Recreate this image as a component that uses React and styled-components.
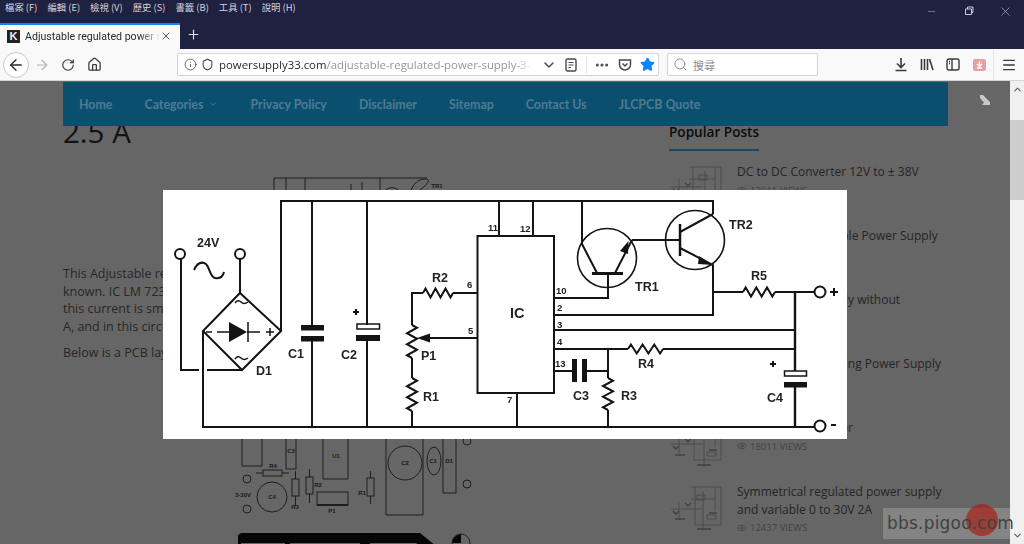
import styled, { createGlobalStyle } from "styled-components";
import {
  ArrowLeft,
  ArrowRight,
  RotateCw,
  Home,
  Info,
  Shield,
  ChevronDown,
  ChevronUp,
  Ellipsis,
  Star,
  Search,
  Menu,
  X,
  Plus,
  Minus,
  Eye,
} from "lucide-react";

const GlobalStyle = createGlobalStyle`
  html, body {
    margin: 0;
    padding: 0;
    height: 100%;
    overflow: hidden;
    background: #fff;
  }
`;

const Browser = styled.div`
  position: relative;
  width: 1024px;
  height: 544px;
  display: flex;
  flex-direction: column;
  overflow: hidden;
  font-family: "Open Sans", "Noto Sans CJK TC", sans-serif;
`;

const TitleBar = styled.div`
  height: 23px;
  flex: none;
  display: flex;
  align-items: flex-start;
  justify-content: space-between;
  background: #1f2140;
`;

const MenuList = styled.div`
  display: flex;
  gap: 10px;
  padding: 0 0 0 5px;
  color: #d4d5de;
  font: 9.4px/14px "Noto Sans CJK TC", sans-serif;
`;

const WindowControls = styled.div`
  display: flex;
  color: #c9cad4;
`;

const WindowButton = styled.div`
  width: 37px;
  height: 22px;
  display: flex;
  align-items: center;
  justify-content: center;
`;

const TabStrip = styled.div`
  height: 26px;
  flex: none;
  display: flex;
  background: #1f2140;
`;

const Tab = styled.div`
  width: 180px;
  box-sizing: border-box;
  display: flex;
  align-items: center;
  padding: 0 8px 2px 7px;
  background: #f9f9fa;
  border-top: 2px solid #0a84ff;
  color: #2a2a2e;
  font: 10.6px "Roboto", sans-serif;
`;

const Favicon = styled.span`
  width: 13px;
  height: 13px;
  flex: none;
  margin-right: 5px;
  background: #222;
  color: #eee;
  font: bold 11px/13px "Liberation Sans", sans-serif;
  text-align: center;
`;

const TabTitle = styled.span`
  flex: 1;
  white-space: nowrap;
  overflow: hidden;
  -webkit-mask-image: linear-gradient(to right, #000 85%, transparent);
  mask-image: linear-gradient(to right, #000 85%, transparent);
`;

const NewTab = styled.div`
  width: 26px;
  padding-bottom: 3px;
  display: flex;
  align-items: center;
  justify-content: center;
  color: #e4e4ea;
`;

const Toolbar = styled.div`
  height: 32px;
  flex: none;
  box-sizing: border-box;
  display: flex;
  align-items: center;
  padding: 0 2px 0 3px;
  background: #f9f9fa;
  border-bottom: 1px solid #cfd6d8;
`;

const BackButton = styled.div`
  width: 26px;
  height: 26px;
  box-sizing: border-box;
  display: flex;
  align-items: center;
  justify-content: center;
  border: 1px solid #c8c8cc;
  border-radius: 50%;
  background: #fff;
  color: #2a2a2e;
`;

const ToolIcon = styled.div`
  width: 26px;
  height: 26px;
  flex: none;
  display: flex;
  align-items: center;
  justify-content: center;
  color: ${(p) => (p.$dim ? "#b1b1b3" : "#3a3a3d")};
`;

const UrlBar = styled.div`
  width: 482px;
  height: 23px;
  flex: none;
  box-sizing: border-box;
  margin-left: 70px;
  display: flex;
  align-items: center;
  padding-left: 3px;
  background: #fff;
  border: 1px solid #d4d4d6;
  border-radius: 2px;
  color: #4a4a4f;
`;

const UrlIcon = styled.div`
  width: ${(p) => p.$w || 18}px;
  flex: none;
  display: flex;
  align-items: center;
  justify-content: center;
`;

const UrlText = styled.div`
  flex: 1;
  min-width: 0;
  margin: 0 5px 0 4px;
  white-space: nowrap;
  overflow: hidden;
  font: 11.4px "Open Sans", sans-serif;
  color: #2a2a2e;
  -webkit-mask-image: linear-gradient(to right, #000 94%, transparent);
  mask-image: linear-gradient(to right, #000 94%, transparent);
`;

const UrlPath = styled.span`
  color: #96969b;
`;

const UrlDivider = styled.div`
  width: 1px;
  height: 17px;
  flex: none;
  margin: 0 4px;
  background: #e4e4e6;
`;

const SearchBox = styled.div`
  width: 151px;
  height: 23px;
  flex: none;
  box-sizing: border-box;
  margin-left: 8px;
  display: flex;
  align-items: center;
  gap: 5px;
  padding-left: 5px;
  background: #fff;
  border: 1px solid #d4d4d6;
  border-radius: 2px;
  color: #8b8b8f;
  font: 11px "Noto Sans CJK TC", sans-serif;
`;

const ToolGroup = styled.div`
  margin-left: auto;
  display: flex;
  align-items: center;
`;

const ToolDivider = styled.div`
  width: 1px;
  height: 30px;
  margin: 0 2px 0 1px;
  background: #e6e6e8;
`;

const Viewport = styled.div`
  flex: 1;
  min-height: 0;
  display: flex;
`;

const Page = styled.div`
  position: relative;
  flex: 1;
  min-width: 0;
  overflow: hidden;
  display: flex;
  gap: 31px;
  padding: 31px 0 0 63px;
  background: #fff;
`;

const Article = styled.div`
  width: 575px;
  flex: none;
`;

const Heading = styled.h1`
  margin: 0;
  font: 500 29.5px/40px "Open Sans", sans-serif;
  color: #303030;
`;

const Paragraph = styled.p`
  margin: 0 0 9px;
  font: 400 12.5px/17.5px "Open Sans", sans-serif;
  color: #646464;
`;

const Figure = styled.svg`
  display: block;
  margin-left: ${(p) => p.$left}px;
  margin-top: ${(p) => p.$top}px;
  fill: none;
  stroke: #4c4c4c;
  stroke-width: 1;
`;

const FigureText = styled.text`
  font: 700 6px "Liberation Sans", sans-serif;
  fill: #444;
  stroke: none;
  text-anchor: middle;
`;

const Sidebar = styled.aside`
  width: 280px;
  flex: none;
`;

const SidebarTitle = styled.h2`
  display: inline-block;
  margin: 10px 0 12px;
  padding-bottom: 8px;
  border-bottom: 2px solid #4bb0f0;
  font: 600 13.6px/19px "Open Sans", sans-serif;
  color: #1c1c1c;
`;

const PostRow = styled.div`
  display: flex;
  gap: 12px;
  height: 64px;
`;

const PostThumb = styled.svg`
  width: 56px;
  height: 54px;
  flex: none;
  fill: none;
  stroke: #5a5a5a;
  stroke-width: 0.7;
  opacity: 0.55;
`;

const PostBody = styled.div`
  flex: 1;
  min-width: 0;
`;

const PostTitle = styled.div`
  width: 215px;
  font: 400 12px/17.5px "Open Sans", sans-serif;
  color: #5c5c5c;
`;

const PostViews = styled.div`
  display: flex;
  align-items: center;
  gap: 3px;
  margin-top: 1px;
  font: 400 9.5px/17px "Open Sans", sans-serif;
  color: #a8a8a8;
`;

const Overlay = styled.div`
  position: absolute;
  inset: 0;
  z-index: 1;
  display: flex;
  align-items: center;
  justify-content: center;
  padding-top: 4px;
  box-sizing: border-box;
  background: rgba(0, 0, 0, 0.6);
`;

const Schematic = styled.svg`
  width: 684px;
  height: 249px;
  display: block;
  background: #fff;
  fill: none;
  stroke: #141414;
  stroke-width: 2;
  filter: blur(0.35px);
`;

const SchLabel = styled.text`
  font: 700 ${(p) => p.$size || 12.5}px "Liberation Sans", sans-serif;
  fill: #222;
  stroke: none;
`;

const Solid = styled.g`
  fill: #141414;
  stroke: none;
`;

const NavBar = styled.nav`
  position: absolute;
  top: 1px;
  left: 63px;
  width: 885px;
  height: 44px;
  z-index: 2;
  box-sizing: border-box;
  display: flex;
  align-items: center;
  gap: 32px;
  padding-left: 16px;
  background: #0b4f6f;
  color: #4d7b91;
  font: 700 12.4px "Lato", sans-serif;
`;

const NavItem = styled.div`
  display: flex;
  align-items: center;
  gap: 5px;
`;

const ExpandIcon = styled.svg`
  position: absolute;
  top: 13px;
  right: 19px;
  z-index: 2;
`;

const Scrollbar = styled.div`
  width: 14px;
  flex: none;
  display: flex;
  flex-direction: column;
  align-items: center;
  background: #f0f0f0;
  color: #555;
`;

const ScrollArrow = styled.div`
  height: 17px;
  display: flex;
  align-items: center;
  justify-content: center;
`;

const ScrollTrack = styled.div`
  flex: 1;
  width: 100%;
  padding-top: 22px;
  box-sizing: border-box;
`;

const ScrollThumb = styled.div`
  height: 80px;
  background: #cdcdcd;
`;

const Watermark = styled.div`
  position: absolute;
  left: 883px;
  top: 508px;
  width: 127px;
  height: 31px;
  z-index: 3;
  box-sizing: border-box;
  padding-left: 4px;
  background: rgba(255, 255, 255, 0.2);
  color: #414141;
  font: 17px/31px "DejaVu Sans", sans-serif;
  letter-spacing: 0.2px;
  white-space: nowrap;
`;

const WatermarkDot = styled.div`
  position: absolute;
  left: 83px;
  top: -4px;
  width: 32px;
  height: 32px;
  border-radius: 50%;
  background: rgba(165, 35, 25, 0.72);
`;

const WatermarkText = styled.span`
  position: relative;
`;

const menus = ["檔案 (F)", "編輯 (E)", "檢視 (V)", "歷史 (S)", "書籤 (B)", "工具 (T)", "說明 (H)"];

const navItems = ["Home", "Categories", "Privacy Policy", "Disclaimer", "Sitemap", "Contact Us", "JLCPCB Quote"];

const posts = [
  { title: "DC to DC Converter 12V to ± 38V", views: "13011 VIEWS" },
  { title: "Regulated, Adjustable Power Supply", views: "16230 VIEWS" },
  { title: "Simple Power Supply without transformer", views: "14872 VIEWS" },
  { title: "Controllable Switching Power Supply", views: "15120 VIEWS" },
  { title: "5V Voltage Regulator", views: "18011 VIEWS" },
  { title: "Symmetrical regulated power supply and variable 0 to 30V 2A", views: "12437 VIEWS" },
];

// zigzag resistors, 3 teeth up and down
const zigH = (x1, x2, y, h = 5) => {
  const s = (x2 - x1) / 6;
  let d = `M${x1} ${y}`;
  for (let i = 0; i < 6; i++) d += ` L${x1 + s * (i + 0.5)} ${y + (i % 2 ? h : -h)}`;
  return `${d} L${x2} ${y}`;
};

const zigV = (x, y1, y2, w = 5) => {
  const s = (y2 - y1) / 6;
  let d = `M${x} ${y1}`;
  for (let i = 0; i < 6; i++) d += ` L${x + (i % 2 ? -w : w)} ${y1 + s * (i + 0.5)}`;
  return `${d} L${x} ${y2}`;
};

const CircuitDiagram = () => (
  <Schematic viewBox="163 190 684 249">
    {/* rails */}
    <path d="M281 331 V201 H713 V214" />
    <path d="M203 331 V427 H815" />
    <path d="M312 201 V326 M312 340 V427" />
    <path d="M367 201 V325 M367 340 V427" />
    <path d="M499 201 V236 M533 201 V236 M517 393 V427" />

    {/* mains input and bridge */}
    <circle cx="180" cy="254" r="5" />
    <circle cx="240" cy="254" r="5" />
    <path d="M240 259 V293 M181 259 V370 H199 M207 370 H242" />
    <path d="M240 293 L281 331 L242 370 L203 331 Z" />
    <path d="M194 270 C197 263 202 261 206 264 C210 268 210 277 215 278 C220 279 223 276 224 272" />
    <path d="M235 303 Q238 299 241 302 T248 302 M235 359 Q238 355 241 358 T248 358" strokeWidth="1.5" />
    <path d="M206 332 H212 M217 332 H229 M247 332 H260 M248 322 V342 M266 332 H274 M270 328 V336" strokeWidth="1.5" />
    <Solid>
      <polygon points="229,322 229,342 247,332" />
      <rect x="301" y="325" width="23" height="5.5" />
      <rect x="301" y="336" width="23" height="5.5" />
      <rect x="356" y="335" width="24" height="6" />
      <rect x="784" y="382" width="23" height="5.5" />
      <rect x="572" y="359" width="5" height="23" />
      <rect x="582" y="359" width="5" height="23" />
      <polygon points="417,338 430,333.5 430,342.5" />
      <polygon points="628.5,241 620,251 628,254" />
      <polygon points="713,265 699,256 698,264" />
    </Solid>
    <rect x="357" y="324" width="22.5" height="5" strokeWidth="1.5" />
    <rect x="784.5" y="371" width="22" height="5" strokeWidth="1.5" />

    {/* IC and feedback */}
    <rect x="477.5" y="236" width="76.5" height="157" />
    <path d="M478 293 H453" />
    <path d={zigH(423, 453, 293, 4.5)} />
    <path d="M423 293 H412 V325" />
    <path d={zigV(412, 325, 358)} />
    <path d="M412 358 V378" />
    <path d={zigV(412, 378, 411)} />
    <path d="M412 411 V427 M478 338 H425" />

    {/* TR1 */}
    <circle cx="607" cy="258" r="29.5" strokeWidth="1.6" />
    <path d="M582 201 V244 L597 273 M615 273 L632 240" />
    <path d="M592 273.5 H623" strokeWidth="3" />
    <path d="M608 274 V298 H554" />

    {/* TR2 */}
    <circle cx="695" cy="240" r="29.5" strokeWidth="1.6" />
    <path d="M632 240 H680 M680 232 L713 214 M680 248 L713 265 V315 H554" />
    <path d="M680 224 V256" strokeWidth="2.5" />

    {/* output side */}
    <path d="M714 292 H743 M775 292 H815" />
    <path d={zigH(743, 775, 292, 4.5)} />
    <path d="M795 292 V371 M795 387 V427" strokeWidth="2.4" />
    <circle cx="820" cy="292" r="5.5" />
    <circle cx="820" cy="426" r="5.5" />
    <path d="M830 292 H838 M834 288 V296 M831 425 H836" />
    <path d="M554 330 H795 M554 349 H628 M663 349 H795" />
    <path d={zigH(628, 663, 349, 4.5)} />
    <path d="M608 349 V378" />
    <path d={zigV(608, 378, 410)} />
    <path d="M608 410 V427" />
    <path d="M554 371 H572 M587 371 H608" />
    <path d="M353 312 H359 M356 309 V315 M770 364 H776 M773 361 V367" />

    <SchLabel x="197" y="247">24V</SchLabel>
    <SchLabel x="256" y="375">D1</SchLabel>
    <SchLabel x="288" y="358">C1</SchLabel>
    <SchLabel x="341" y="359">C2</SchLabel>
    <SchLabel x="432" y="282">R2</SchLabel>
    <SchLabel x="421" y="360">P1</SchLabel>
    <SchLabel x="423" y="401">R1</SchLabel>
    <SchLabel x="510" y="318" $size={14.5}>IC</SchLabel>
    <SchLabel x="635" y="291">TR1</SchLabel>
    <SchLabel x="729" y="229">TR2</SchLabel>
    <SchLabel x="751" y="280">R5</SchLabel>
    <SchLabel x="638" y="368">R4</SchLabel>
    <SchLabel x="573" y="400">C3</SchLabel>
    <SchLabel x="621" y="400">R3</SchLabel>
    <SchLabel x="767" y="402">C4</SchLabel>
    <SchLabel x="488" y="231" $size={9.5}>11</SchLabel>
    <SchLabel x="520" y="232" $size={9.5}>12</SchLabel>
    <SchLabel x="467" y="288" $size={9.5}>6</SchLabel>
    <SchLabel x="468" y="334" $size={9.5}>5</SchLabel>
    <SchLabel x="507" y="403" $size={9.5}>7</SchLabel>
    <SchLabel x="556" y="294" $size={9.5}>10</SchLabel>
    <SchLabel x="557" y="311" $size={9.5}>2</SchLabel>
    <SchLabel x="557" y="328" $size={9.5}>3</SchLabel>
    <SchLabel x="557" y="345" $size={9.5}>4</SchLabel>
    <SchLabel x="555" y="367" $size={9.5}>13</SchLabel>
  </Schematic>
);

const SmallSchematic = () => (
  <Figure $left={177} $top={24} width="240" height="89" viewBox="240 176 240 89">
    <path d="M274 190 V178 H427 M286 178 V190 M305 178 V190 M351 184 V190 M362 182 V190 M380 178 V190" />
    <path d="M386 190 Q392 185 398 190 M411 190 Q416 178 427 179 Q432 181 420 190" />
    <FigureText x="437" y="188">TR1</FigureText>
  </Figure>
);

const PcbLayout = () => (
  <Figure $left={172} $top={0} width="240" height="175" viewBox="235 370 240 175">
    <path d="M242 370 V465 H262 V370 M286 370 V468 H296 V370 M323 370 V478 H348 V370 M386 370 V514 H423 V370 M443 370 V492 H456 V370" />
    <ellipse cx="434" cy="460" rx="7" ry="14" />
    <circle cx="405" cy="462" r="17" />
    <circle cx="467" cy="440" r="4" />
    <circle cx="467" cy="483" r="4" />
    <circle cx="247" cy="478" r="4" />
    <circle cx="247" cy="508" r="4" />
    <circle cx="272" cy="496" r="15" />
    <path d="M256 472 H263 M282 472 H289 M295.5 470 V478 M295.5 495 V505 M309.5 468 V476 M309.5 493 V502 M370.5 470 V477 M370.5 495 V503" />
    <rect x="263" y="469" width="19" height="6" />
    <rect x="292" y="478" width="7" height="17" />
    <rect x="306" y="476" width="7" height="17" />
    <rect x="367" y="477" width="7" height="18" />
    <rect x="317" y="491" width="31" height="13" />
    <path d="M317 504 H348" strokeWidth="2" />
    <path d="M238 545 V534 L241 532 H420 L436 545 Z M461 533 A9 9 0 0 0 452 542 H461 Z" fill="#111" stroke="none" />
    <circle cx="461" cy="542" r="9" />
    <path d="M241 545 V542 H285 V545 M290 545 V542 H360 V545 M370 545 V542 H416 L420 545" fill="#fff" stroke="none" />
    <FigureText x="273" y="467">R4</FigureText>
    <FigureText x="336" y="457">U1</FigureText>
    <FigureText x="291" y="452">C3</FigureText>
    <FigureText x="405" y="464">C2</FigureText>
    <FigureText x="433" y="462">C1</FigureText>
    <FigureText x="449" y="462">D1</FigureText>
    <FigureText x="243" y="496">3-30V</FigureText>
    <FigureText x="272" y="498">C4</FigureText>
    <FigureText x="295" y="508">R3</FigureText>
    <FigureText x="318" y="486">R2</FigureText>
    <FigureText x="332" y="512">P1</FigureText>
    <FigureText x="362" y="494">R1</FigureText>
  </Figure>
);

const Thumb = ({ seed }) => (
  <PostThumb viewBox="0 0 56 54">
    <path d={`M${20 + seed} 4 H52 V${40 + seed} H${24 + seed} V4 M${20 + seed} 16 H46 M2 ${24 + seed} H34 M10 ${16 + seed} V36 M${36 - seed} 8 V48 M46 4 V28`} />
    <path d={`M4 ${26 + seed} l3 3 l3 -3 M16 20 l3 3 l3 -3 M40 ${32 - seed} h8 M28 46 h14 M6 36 h10`} strokeWidth="1.4" />
    <rect x={30 - seed} y="12" width="8" height="5" />
    <rect x="38" y={34 - seed} width="9" height="4" />
  </PostThumb>
);

const App = () => {
  return (
    <Browser>
      <GlobalStyle />
      <TitleBar>
        <MenuList>
          {menus.map((m) => (
            <span key={m}>{m}</span>
          ))}
        </MenuList>
        <WindowControls>
          <WindowButton><Minus size={11} strokeWidth={1} /></WindowButton>
          <WindowButton>
            <svg width="10" height="10" viewBox="0 0 10 10" fill="none" stroke="currentColor">
              <path d="M1.5 3 H7.5 V8.5 H1.5 Z M3.5 3 V1 H9 V6.5 H7.5" />
            </svg>
          </WindowButton>
          <WindowButton><X size={15} strokeWidth={1} /></WindowButton>
        </WindowControls>
      </TitleBar>

      <TabStrip>
        <Tab>
          <Favicon>K</Favicon>
          <TabTitle>Adjustable regulated power supply 3-30V</TabTitle>
          <X size={12} strokeWidth={1.6} />
        </Tab>
        <NewTab><Plus size={15} strokeWidth={1.8} /></NewTab>
      </TabStrip>

      <Toolbar>
        <BackButton><ArrowLeft size={18} strokeWidth={1.8} /></BackButton>
        <ToolIcon $dim><ArrowRight size={16} strokeWidth={1.8} /></ToolIcon>
        <ToolIcon><RotateCw size={14} strokeWidth={2} /></ToolIcon>
        <ToolIcon><Home size={15} strokeWidth={2} /></ToolIcon>
        <UrlBar>
          <UrlIcon><Info size={13} strokeWidth={1.5} /></UrlIcon>
          <UrlIcon $w={16}><Shield size={13} strokeWidth={2} /></UrlIcon>
          <UrlText>
            powersupply33.com<UrlPath>/adjustable-regulated-power-supply-3-30v-2-5a</UrlPath>
          </UrlText>
          <UrlIcon $w={22}><ChevronDown size={16} strokeWidth={2.2} /></UrlIcon>
          <UrlIcon $w={22}>
            <svg width="12" height="14" viewBox="0 0 12 14" fill="none" stroke="currentColor">
              <rect x="1" y="1" width="10" height="12" rx="1.5" strokeWidth="1.4" />
              <path d="M3.5 4.5 H8.5 M3.5 7 H8.5 M3.5 9.5 H6" />
            </svg>
          </UrlIcon>
          <UrlDivider />
          <UrlIcon $w={22}><Ellipsis size={16} strokeWidth={2.6} /></UrlIcon>
          <UrlIcon $w={23}>
            <svg width="14" height="14" viewBox="0 0 14 14" fill="none" stroke="currentColor" strokeWidth="1.5">
              <path d="M1.5 2 H12.5 V6.5 A5.5 5.5 0 0 1 1.5 6.5 Z M4.5 5.5 L7 8 L9.5 5.5" />
            </svg>
          </UrlIcon>
          <UrlIcon $w={22}><Star size={15} fill="#0a84ff" color="#0a84ff" /></UrlIcon>
        </UrlBar>
        <SearchBox>
          <Search size={15} strokeWidth={1.5} />
          搜尋
        </SearchBox>
        <ToolGroup>
          <ToolIcon>
            <svg width="14" height="15" viewBox="0 0 14 15" fill="none" stroke="currentColor" strokeWidth="1.6">
              <path d="M7 1 V10 M3 6.5 L7 10.5 L11 6.5 M1.5 13.5 H12.5" />
            </svg>
          </ToolIcon>
          <ToolIcon>
            <svg width="14" height="13" viewBox="0 0 14 13" fill="none" stroke="currentColor" strokeWidth="1.6">
              <path d="M1.5 1 V12 M4.5 1 V12 M7.5 1 V12 M9.5 1 L13 12" />
            </svg>
          </ToolIcon>
          <ToolIcon>
            <svg width="14" height="13" viewBox="0 0 14 13" fill="none" stroke="currentColor" strokeWidth="1.4">
              <rect x="1" y="1" width="12" height="11" rx="2" />
              <path d="M6 1 V12 M3 3.5 H4 M3 5.5 H4" />
            </svg>
          </ToolIcon>
          <ToolIcon>
            <svg width="13" height="12" viewBox="0 0 13 12">
              <rect width="13" height="12" rx="2" fill="#e8a0a6" />
              <path d="M6.5 2.5 V7 M4 5 L6.5 7.5 L9 5 M4 9 H9" stroke="#fff" strokeWidth="1.4" fill="none" />
            </svg>
          </ToolIcon>
          <ToolDivider />
          <ToolIcon><Menu size={16} strokeWidth={2} /></ToolIcon>
        </ToolGroup>
      </Toolbar>

      <Viewport>
        <Page>
          <Article>
            <Heading>2.5 A</Heading>
            <SmallSchematic />
            <Paragraph>
              This Adjustable regulated power supply uses components that are well
              <br />
              known. IC LM 723 is a voltage regulator that can deliver a small current, but
              <br />
              this current is small for most uses, so a pair of transistors raises it up to 2.5
              <br />
              A, and in this circuit it stays stable.
            </Paragraph>
            <Paragraph>Below is a PCB layout of the power supply.</Paragraph>
            <PcbLayout />
          </Article>
          <Sidebar>
            <SidebarTitle>Popular Posts</SidebarTitle>
            {posts.map((post, i) => (
              <PostRow key={post.title}>
                <Thumb seed={i % 3} />
                <PostBody>
                  <PostTitle>{post.title}</PostTitle>
                  <PostViews>
                    <Eye size={10} />
                    {post.views}
                  </PostViews>
                </PostBody>
              </PostRow>
            ))}
          </Sidebar>
          <Overlay>
            <CircuitDiagram />
          </Overlay>
          <NavBar>
            {navItems.map((item) => (
              <NavItem key={item}>
                {item}
                {item === "Categories" && <ChevronDown size={10} />}
              </NavItem>
            ))}
          </NavBar>
          <ExpandIcon width="12" height="12" viewBox="0 0 12 12">
            <path d="M1 1 L4 1 L11 8 V11 H3 L5 8.5 L1 4 Z" fill="#c9c9c9" />
          </ExpandIcon>
        </Page>
        <Scrollbar>
          <ScrollArrow><ChevronUp size={11} strokeWidth={2.2} /></ScrollArrow>
          <ScrollTrack><ScrollThumb /></ScrollTrack>
          <ScrollArrow><ChevronDown size={11} strokeWidth={2.2} /></ScrollArrow>
        </Scrollbar>
      </Viewport>

      <Watermark>
        <WatermarkDot />
        <WatermarkText>bbs.pigoo.com</WatermarkText>
      </Watermark>
    </Browser>
  );
};

export default App;
